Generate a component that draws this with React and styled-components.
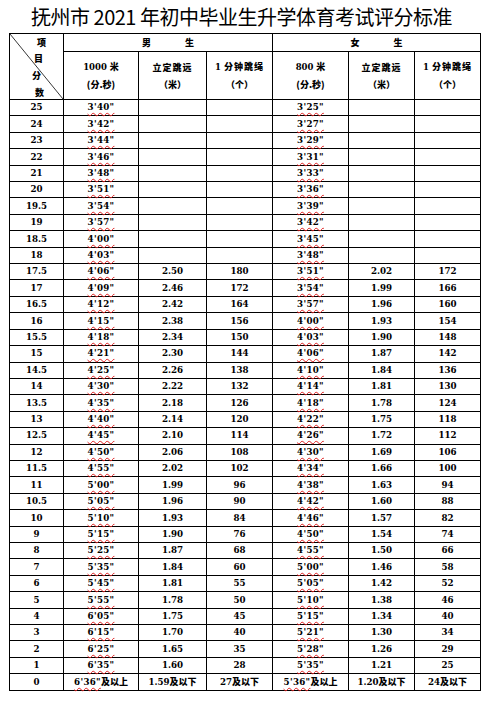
import styled, { createGlobalStyle } from "styled-components";

const GlobalStyle = createGlobalStyle`
  html, body {
    margin: 0;
    padding: 0;
    background: #fff;
  }
`;

const Page = styled.div`
  width: 487px;
  height: 704px;
  background: #fff;
  padding: 0 0 0 9px;
  box-sizing: border-box;
`;

const Title = styled.h1`
  margin: 0;
  height: 33px;
  width: 471px;
  padding-top: 4px;
  box-sizing: border-box;
  text-align: center;
  font-family: "Noto Sans CJK SC", "Noto Sans", sans-serif;
  font-weight: 400;
  font-size: 20px;
  line-height: 26px;
  color: #000;
  letter-spacing: -0.5px;
  padding-right: 6px;
`;

const Table = styled.table`
  width: 471px;
  table-layout: fixed;
  border-collapse: collapse;
  font-family: "DejaVu Serif", "Noto Sans CJK SC", serif;
  font-weight: bold;
  font-size: 8.7px;
  color: #000;
`;

const Cell = styled.td`
  border: 1px solid #000;
  padding: 0;
  text-align: center;
  vertical-align: middle;
  height: ${(p) => p.$h || "15.42px"};
  line-height: 1;
  white-space: nowrap;
`;

const HeadText = styled.span`
  font-family: "Noto Sans CJK SC", sans-serif;
  font-weight: 900;
  font-size: 9px;
  letter-spacing: ${(p) => p.$ls || "0"};
  word-spacing: ${(p) => p.$gap || "0"};
`;

const TwoLine = styled.div`
  display: flex;
  flex-direction: column;
  align-items: center;
  line-height: 17px;
  font-size: 8.5px;
`;

const CornerCell = styled(Cell)`
  position: relative;
`;

const Diagonal = styled.svg`
  position: absolute;
  left: 0;
  top: 0;
  width: 100%;
  height: 100%;
`;

const CornerLabel = styled.span`
  position: absolute;
  left: ${(p) => p.$x}px;
  top: ${(p) => p.$y}px;
  font-family: "Noto Sans CJK SC", sans-serif;
  font-weight: 900;
  font-size: 9px;
  line-height: 1;
`;

const Wavy = styled.span`
  text-decoration: underline wavy #e02020;
  text-decoration-thickness: 1px;
  text-underline-offset: 2px;
  letter-spacing: 0.3px;
`;

const Suffix = styled.span`
  font-family: "Noto Sans CJK SC", sans-serif;
  font-weight: 900;
  font-size: 9px;
`;

const scores = ["25", "24", "23", "22", "21", "20", "19.5", "19", "18.5", "18", "17.5", "17", "16.5", "16", "15.5", "15", "14.5", "14", "13.5", "13", "12.5", "12", "11.5", "11", "10.5", "10", "9", "8", "7", "6", "5", "4", "3", "2", "1"];

const boyRun = ["3'40\"", "3'42\"", "3'44\"", "3'46\"", "3'48\"", "3'51\"", "3'54\"", "3'57\"", "4'00\"", "4'03\"", "4'06\"", "4'09\"", "4'12\"", "4'15\"", "4'18\"", "4'21\"", "4'25\"", "4'30\"", "4'35\"", "4'40\"", "4'45\"", "4'50\"", "4'55\"", "5'00\"", "5'05\"", "5'10\"", "5'15\"", "5'25\"", "5'35\"", "5'45\"", "5'55\"", "6'05\"", "6'15\"", "6'25\"", "6'35\""];
const boyJump = ["2.50", "2.46", "2.42", "2.38", "2.34", "2.30", "2.26", "2.22", "2.18", "2.14", "2.10", "2.06", "2.02", "1.99", "1.96", "1.93", "1.90", "1.87", "1.84", "1.81", "1.78", "1.75", "1.70", "1.65", "1.60"];
const boyRope = ["180", "172", "164", "156", "150", "144", "138", "132", "126", "120", "114", "108", "102", "96", "90", "84", "76", "68", "60", "55", "50", "45", "40", "35", "28"];

const girlRun = ["3'25\"", "3'27\"", "3'29\"", "3'31\"", "3'33\"", "3'36\"", "3'39\"", "3'42\"", "3'45\"", "3'48\"", "3'51\"", "3'54\"", "3'57\"", "4'00\"", "4'03\"", "4'06\"", "4'10\"", "4'14\"", "4'18\"", "4'22\"", "4'26\"", "4'30\"", "4'34\"", "4'38\"", "4'42\"", "4'46\"", "4'50\"", "4'55\"", "5'00\"", "5'05\"", "5'10\"", "5'15\"", "5'21\"", "5'28\"", "5'35\""];
const girlJump = ["2.02", "1.99", "1.96", "1.93", "1.90", "1.87", "1.84", "1.81", "1.78", "1.75", "1.72", "1.69", "1.66", "1.63", "1.60", "1.57", "1.54", "1.50", "1.46", "1.42", "1.38", "1.34", "1.30", "1.26", "1.21"];
const girlRope = ["172", "166", "160", "154", "148", "142", "136", "130", "124", "118", "112", "106", "100", "94", "88", "82", "74", "66", "58", "52", "46", "40", "34", "29", "25"];

// 立定跳远/跳绳 从 17.5 分开始
const OFFSET = 10;

const widths = [54, 75, 68, 66, 76, 66, 66];

const App = () => {
  return (
    <Page>
      <GlobalStyle />
      <Title>抚州市 2021 年初中毕业生升学体育考试评分标准</Title>
      <Table>
        <colgroup>
          {widths.map((w, i) => (
            <col key={i} style={{ width: w }} />
          ))}
        </colgroup>
        <thead>
          <tr>
            <CornerCell rowSpan={2} $h="17px">
              <Diagonal viewBox="0 0 54 66" preserveAspectRatio="none">
                <line x1="0" y1="0" x2="54" y2="66" stroke="#000" strokeWidth="0.8" />
              </Diagonal>
              <CornerLabel $x={27} $y={4}>项</CornerLabel>
              <CornerLabel $x={24} $y={20}>目</CornerLabel>
              <CornerLabel $x={22} $y={37}>分</CornerLabel>
              <CornerLabel $x={25} $y={54}>数</CornerLabel>
            </CornerCell>
            <Cell colSpan={3} $h="17px">
              <HeadText $gap="32px">男 生</HeadText>
            </Cell>
            <Cell colSpan={3} $h="17px">
              <HeadText $gap="32px">女 生</HeadText>
            </Cell>
          </tr>
          <tr>
            <Cell $h="47px">
              <TwoLine>
                <span>1000 <HeadText>米</HeadText></span>
                <HeadText>(分.秒)</HeadText>
              </TwoLine>
            </Cell>
            <Cell $h="47px">
              <TwoLine>
                <HeadText $ls="1px">立定跳远</HeadText>
                <HeadText>（米）</HeadText>
              </TwoLine>
            </Cell>
            <Cell $h="47px">
              <TwoLine>
                <span>1 <HeadText $ls="1px">分钟跳绳</HeadText></span>
                <HeadText>（个）</HeadText>
              </TwoLine>
            </Cell>
            <Cell $h="47px">
              <TwoLine>
                <span>800 <HeadText>米</HeadText></span>
                <HeadText>(分.秒)</HeadText>
              </TwoLine>
            </Cell>
            <Cell $h="47px">
              <TwoLine>
                <HeadText $ls="1px">立定跳远</HeadText>
                <HeadText>（米）</HeadText>
              </TwoLine>
            </Cell>
            <Cell $h="47px">
              <TwoLine>
                <span>1 <HeadText $ls="1px">分钟跳绳</HeadText></span>
                <HeadText>（个）</HeadText>
              </TwoLine>
            </Cell>
          </tr>
        </thead>
        <tbody>
          {scores.map((s, i) => {
            const j = i - OFFSET;
            return (
              <tr key={s}>
                <Cell>{s}</Cell>
                <Cell><Wavy>{boyRun[i]}</Wavy></Cell>
                <Cell>{j >= 0 ? boyJump[j] : ""}</Cell>
                <Cell>{j >= 0 ? boyRope[j] : ""}</Cell>
                <Cell><Wavy>{girlRun[i]}</Wavy></Cell>
                <Cell>{j >= 0 ? girlJump[j] : ""}</Cell>
                <Cell>{j >= 0 ? girlRope[j] : ""}</Cell>
              </tr>
            );
          })}
          <tr>
            <Cell>0</Cell>
            <Cell><Wavy>6'36"</Wavy><Suffix>及以上</Suffix></Cell>
            <Cell>1.59<Suffix>及以下</Suffix></Cell>
            <Cell>27<Suffix>及以下</Suffix></Cell>
            <Cell><Wavy>5'36"</Wavy><Suffix>及以上</Suffix></Cell>
            <Cell>1.20<Suffix>及以下</Suffix></Cell>
            <Cell>24<Suffix>及以下</Suffix></Cell>
          </tr>
        </tbody>
      </Table>
    </Page>
  );
};

export default App;
